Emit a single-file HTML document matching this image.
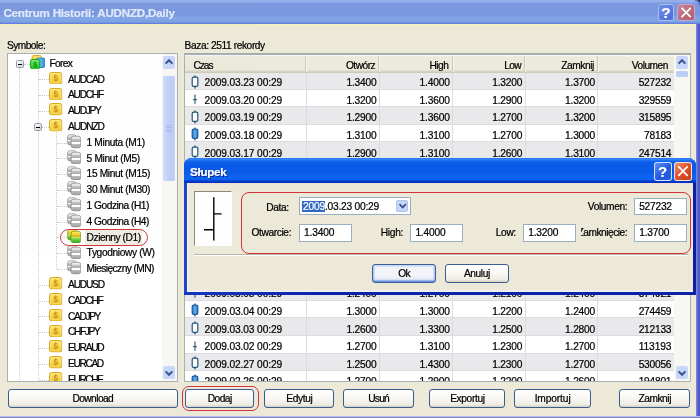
<!DOCTYPE html><html><head><meta charset="utf-8"><title>Centrum Historii</title><style>
*{margin:0;padding:0;box-sizing:border-box}
html,body{width:700px;height:418px;overflow:hidden;background:#ECE9D8}
body{font-family:"Liberation Sans","DejaVu Sans",sans-serif;font-size:10.2px;color:#000;position:relative;-webkit-text-stroke-width:0.22px}
#w{position:absolute;left:0;top:0;width:700px;height:418px;overflow:hidden;background:#ECE9D8;will-change:transform;opacity:0.999}
.a{position:absolute}
.t{position:absolute;white-space:pre;line-height:12px;height:12px;letter-spacing:-0.7px}
.n{letter-spacing:-0.3px}
#tb{left:0;top:0;width:700px;height:25px;background:linear-gradient(#95b0eb 0%,#93aeea 8%,#7c98e0 13%,#7a96df 58%,#7c9fe6 64%,#82a6e7 72%,#7ea5e3 82%,#7aa2df 89%,#6a80e2 92%,#6478e1 96%,#8a98d8 100%)}
#tbt{left:3.4px;top:5px;font-size:11.6px;font-weight:bold;color:#e0e9fa;line-height:16px;height:16px;letter-spacing:-0.2px}
.cb{position:absolute;border-radius:3px;border:1px solid #a9bdf0}
.pan{position:absolute;background:#fff;border:1px solid #a9b0af;overflow:hidden}
.btn{position:absolute;height:18.4px;top:389.3px;border:1px solid #3d5c8e;border-radius:3px;background:linear-gradient(#fff 0%,#f8f7f2 50%,#eeece2 85%,#d6d1c2 100%);text-align:center;line-height:18.8px;letter-spacing:-0.7px;white-space:pre}
.row{position:absolute;left:0;width:489px;height:17.6px}
.g{background:#e9e9eb}
.hl{position:absolute;left:0;width:489px;height:1px;background:#dcdce0}
.vl{position:absolute;top:17px;width:1px;height:320px;background:#dcdce0}
.c{position:absolute;text-align:right;white-space:pre;line-height:12px;height:12px;letter-spacing:-0.4px}
.hd{position:absolute;top:0;height:17.5px;background:#ebeadb}
.inp{position:absolute;height:17.4px;background:#fff;border:1px solid #9aaec2;line-height:16.6px;padding-left:4.2px;letter-spacing:-0.4px;white-space:pre}
.dot-v{position:absolute;width:0;border-left:1px dotted #cbcbcb}
.dot-h{position:absolute;height:0;border-top:1px dotted #cbcbcb}
</style></head><body><div id="w">
<svg width="0" height="0" style="position:absolute"><defs>
<linearGradient id="gy" x1="0" y1="0" x2="0" y2="1"><stop offset="0" stop-color="#fce672"/><stop offset="1" stop-color="#f1c42e"/></linearGradient>
<linearGradient id="gg" x1="0" y1="0" x2="0" y2="1"><stop offset="0" stop-color="#74ea70"/><stop offset="1" stop-color="#22c226"/></linearGradient>
<linearGradient id="gb" x1="0" y1="0" x2="1" y2="0"><stop offset="0" stop-color="#8fd0f5"/><stop offset="1" stop-color="#2f8fdc"/></linearGradient>
<linearGradient id="gc" x1="0" y1="0" x2="0" y2="1"><stop offset="0" stop-color="#f4f4f4"/><stop offset="0.45" stop-color="#d9d9d9"/><stop offset="1" stop-color="#b9b9b9"/></linearGradient>
<linearGradient id="gdb" x1="0" y1="0" x2="0" y2="1"><stop offset="0" stop-color="#f2f2f2"/><stop offset="0.24" stop-color="#dedede"/><stop offset="0.3" stop-color="#b6b6b6"/><stop offset="0.48" stop-color="#b2b2b2"/><stop offset="0.52" stop-color="#fff"/><stop offset="0.62" stop-color="#fff"/><stop offset="0.67" stop-color="#bcbcbc"/><stop offset="1" stop-color="#a2a2a2"/></linearGradient>
<linearGradient id="gdc" x1="0" y1="0" x2="0" y2="1"><stop offset="0" stop-color="#fff46e"/><stop offset="0.28" stop-color="#f3d22c"/><stop offset="0.44" stop-color="#dcae10"/><stop offset="0.5" stop-color="#e6f2a0"/><stop offset="0.56" stop-color="#8fe456"/><stop offset="1" stop-color="#27a616"/></linearGradient>
<linearGradient id="gcy" x1="0" y1="0" x2="0" y2="1"><stop offset="0" stop-color="#fff27a"/><stop offset="1" stop-color="#e2b414"/></linearGradient>
<linearGradient id="gcg" x1="0" y1="0" x2="0" y2="1"><stop offset="0" stop-color="#9bef5a"/><stop offset="1" stop-color="#2fae18"/></linearGradient>
<linearGradient id="gcf" x1="0" y1="0" x2="1" y2="0"><stop offset="0" stop-color="#2876c8"/><stop offset="0.5" stop-color="#62aeec"/><stop offset="1" stop-color="#2876c8"/></linearGradient>
<symbol id="i-d" viewBox="0 0 14 13"><rect x="0.5" y="0.5" width="13" height="12" rx="2.2" fill="url(#gy)" stroke="#d6a51c"/><rect x="1.6" y="1.6" width="10.8" height="9.8" rx="1.4" fill="none" stroke="#fbe98a" stroke-width="0.7"/><text x="7" y="9.7" font-size="8.6" font-weight="bold" text-anchor="middle" fill="#c48e14" font-family="Liberation Sans, sans-serif" style="-webkit-text-stroke-width:0">$</text></symbol>
<symbol id="i-fx" viewBox="0 0 16 15"><rect x="2.2" y="0.5" width="9.4" height="8" rx="1.8" fill="url(#gy)" stroke="#d8a81f"/><rect x="6.4" y="3.2" width="9" height="9.6" rx="1.8" fill="url(#gb)" stroke="#2a84d2"/><rect x="0.5" y="4.6" width="9.4" height="9.6" rx="1.8" fill="url(#gg)" stroke="#19a51c"/><text x="5.2" y="12" font-size="7" font-weight="bold" text-anchor="middle" fill="#0b8a12" font-family="Liberation Sans, sans-serif" style="-webkit-text-stroke-width:0">$</text></symbol>
<symbol id="i-db" viewBox="0 0 14.2 14.6"><rect x="0.6" y="0.7" width="8.6" height="10.2" rx="2.2" fill="url(#gdb)" stroke="#9a9a9a" stroke-width="0.8"/><rect x="4.1" y="2.2" width="9.6" height="11.8" rx="2.4" fill="url(#gdb)" stroke="#8e8e8e" stroke-width="0.8"/></symbol>
<symbol id="i-dbc" viewBox="0 0 14.2 14.6"><rect x="0.6" y="0.7" width="8.6" height="10.2" rx="2.2" fill="url(#gdc)" stroke="#9aa22a" stroke-width="0.8"/><rect x="4.1" y="2.2" width="9.6" height="11.8" rx="2.4" fill="url(#gdc)" stroke="#7a9a20" stroke-width="0.8"/></symbol>
<symbol id="c-h" viewBox="0 0 8 14"><path d="M4 0.4V2.2M4 11.4V13.4" stroke="#1f5474" stroke-width="1.2"/><rect x="1.2" y="2.2" width="5.6" height="9.2" rx="1.4" fill="#fff" stroke="#1f5474" stroke-width="1.2"/></symbol>
<symbol id="c-f" viewBox="0 0 8 14"><path d="M4 0.4V2.2M4 11.4V13.4" stroke="#1c5a9a" stroke-width="1.2"/><rect x="1.2" y="2.2" width="5.6" height="9.2" rx="1.4" fill="url(#gcf)" stroke="#1c5a9a" stroke-width="1.2"/></symbol>
<symbol id="c-d" viewBox="0 0 8 14"><path d="M4 2.6V11.8M2.2 7.6H5.8" stroke="#1f567a" stroke-width="1.1"/></symbol>
<symbol id="chev-u" viewBox="0 0 12 12"><path d="M2.6 7.6L6 4.2L9.4 7.6" fill="none" stroke="#38548f" stroke-width="2"/></symbol>
<symbol id="chev-d" viewBox="0 0 12 12"><path d="M2.6 4.4L6 7.8L9.4 4.4" fill="none" stroke="#38548f" stroke-width="2"/></symbol>
</defs></svg>
<div class="a" id="tb"></div>
<div class="a" style="left:0;top:24.3px;width:700px;height:1.4px;background:#eef2c0"></div><div class="a" style="left:0;top:25.7px;width:700px;height:2.4px;background:linear-gradient(#efe4dc,#ece9d8)"></div>
<div class="t" id="tbt">Centrum Historii: AUDNZD,Daily</div>
<svg class="a" style="left:694.5px;top:0" width="5.5" height="5.5" viewBox="0 0 5.5 5.5"><path d="M0 0H5.5V5.5C5.5 2.4 3.1 0 0 0Z" fill="#222c52"/><path d="M0 0.6C2.7 0.6 4.9 2.8 4.9 5.5" fill="none" stroke="#566ecc" stroke-width="1.2"/></svg>
<div class="cb" style="left:657.6px;top:4px;width:16.8px;height:17px;background:linear-gradient(135deg,#6f8fe4,#4a6cd6)"></div>
<div class="t" style="left:657.6px;top:3.6px;width:16.8px;text-align:center;color:#fff;font-weight:bold;font-size:15.5px;line-height:18px;height:18px;letter-spacing:0">?</div>
<div class="cb" style="left:677px;top:4px;width:18.2px;height:17px;background:linear-gradient(135deg,#c98396,#b05a6a);border-color:#c4a8d4"></div>
<svg class="a" style="left:677px;top:4px" width="18.2" height="17" viewBox="0 0 18.2 17"><path d="M4.6 3.9L13.8 13.1M13.8 3.9L4.6 13.1" stroke="#fff" stroke-width="1.8"/></svg>
<div class="a" style="left:696px;top:24px;width:4px;height:394px;background:linear-gradient(90deg,#8a92e0,#5c62d0 40%,#5058c8)"></div>
<div class="a" style="left:0;top:415.5px;width:700px;height:2.5px;background:linear-gradient(#ccd0f3,#a2a6e2 40%,#8085d2 80%,#787dcc)"></div>
<div class="t" style="left:6.9px;top:39.6px;letter-spacing:-0.52px">Symbole:</div>
<div class="t" style="left:184.6px;top:39.6px;letter-spacing:-0.41px">Baza: 2511 rekordy</div>
<div class="a" style="left:6.9px;top:52.5px;width:171.2px;height:1.4px;background:#a3adac"></div>
<div class="pan" style="left:6.9px;top:53.3px;width:171.2px;height:328.7px">
<div class="dot-v" style="left:11.3px;top:13.7px;height:330px"></div>
<div class="dot-v" style="left:30.3px;top:15.7px;height:330px"></div>
<div class="dot-v" style="left:48.5px;top:78.2px;height:136.7px"></div>
<div class="dot-h" style="left:16.1px;top:9.7px;width:6px"></div>
<div class="dot-h" style="left:30.7px;top:25.2px;width:10.5px"></div>
<div class="dot-h" style="left:30.7px;top:41.0px;width:10.5px"></div>
<div class="dot-h" style="left:30.7px;top:56.8px;width:10.5px"></div>
<div class="dot-h" style="left:30.7px;top:72.6px;width:10.5px"></div>
<div class="dot-h" style="left:48.9px;top:88.4px;width:10.5px"></div>
<div class="dot-h" style="left:48.9px;top:104.2px;width:10.5px"></div>
<div class="dot-h" style="left:48.9px;top:120.0px;width:10.5px"></div>
<div class="dot-h" style="left:48.9px;top:135.8px;width:10.5px"></div>
<div class="dot-h" style="left:48.9px;top:151.6px;width:10.5px"></div>
<div class="dot-h" style="left:48.9px;top:167.4px;width:10.5px"></div>
<div class="dot-h" style="left:48.9px;top:183.2px;width:10.5px"></div>
<div class="dot-h" style="left:48.9px;top:199.0px;width:10.5px"></div>
<div class="dot-h" style="left:48.9px;top:214.8px;width:10.5px"></div>
<div class="dot-h" style="left:30.7px;top:230.6px;width:10.5px"></div>
<div class="dot-h" style="left:30.7px;top:246.4px;width:10.5px"></div>
<div class="dot-h" style="left:30.7px;top:262.2px;width:10.5px"></div>
<div class="dot-h" style="left:30.7px;top:278.0px;width:10.5px"></div>
<div class="dot-h" style="left:30.7px;top:293.8px;width:10.5px"></div>
<div class="dot-h" style="left:30.7px;top:309.6px;width:10.5px"></div>
<div class="dot-h" style="left:30.7px;top:325.4px;width:10.5px"></div>
<div class="a" style="left:7.9px;top:6.0px;width:8px;height:8px;border:1px solid #8c9cb4;border-radius:1.5px;background:linear-gradient(135deg,#fff,#d4d0c4)"></div>
<div class="a" style="left:9.7px;top:9.4px;width:4.4px;height:1.2px;background:#000"></div>
<div class="a" style="left:26.3px;top:69.1px;width:8px;height:8px;border:1px solid #8c9cb4;border-radius:1.5px;background:linear-gradient(135deg,#fff,#d4d0c4)"></div>
<div class="a" style="left:28.1px;top:72.5px;width:4.4px;height:1.2px;background:#000"></div>
<div class="a" style="left:76.7px;top:175.3px;width:57.8px;height:15px;background:#efede1"></div>
<svg class="a" style="left:21.7px;top:0.5px" width="15.6" height="14.6"><use href="#i-fx"/></svg>
<div class="t" style="left:41.6px;top:3.6px;letter-spacing:-0.64px">Forex</div>
<svg class="a" style="left:41.4px;top:17.5px" width="13.4" height="12.4"><use href="#i-d"/></svg>
<div class="t" style="left:60.2px;top:19.4px;letter-spacing:-1.24px">AUDCAD</div>
<svg class="a" style="left:41.4px;top:33.3px" width="13.4" height="12.4"><use href="#i-d"/></svg>
<div class="t" style="left:60.2px;top:35.2px;letter-spacing:-1.27px">AUDCHF</div>
<svg class="a" style="left:41.4px;top:49.1px" width="13.4" height="12.4"><use href="#i-d"/></svg>
<div class="t" style="left:60.2px;top:51.0px;letter-spacing:-1.29px">AUDJPY</div>
<svg class="a" style="left:41.4px;top:64.9px" width="13.4" height="12.4"><use href="#i-d"/></svg>
<div class="t" style="left:60.2px;top:66.8px;letter-spacing:-1.11px">AUDNZD</div>
<svg class="a" style="left:59.1px;top:79.7px" width="14.2" height="14.6"><use href="#i-db"/></svg>
<div class="t" style="left:78.7px;top:82.6px;letter-spacing:-0.36px">1 Minuta (M1)</div>
<svg class="a" style="left:59.1px;top:95.5px" width="14.2" height="14.6"><use href="#i-db"/></svg>
<div class="t" style="left:78.7px;top:98.4px;letter-spacing:-0.33px">5 Minut (M5)</div>
<svg class="a" style="left:59.1px;top:111.3px" width="14.2" height="14.6"><use href="#i-db"/></svg>
<div class="t" style="left:78.7px;top:114.2px;letter-spacing:-0.36px">15 Minut (M15)</div>
<svg class="a" style="left:59.1px;top:127.1px" width="14.2" height="14.6"><use href="#i-db"/></svg>
<div class="t" style="left:78.7px;top:130.0px;letter-spacing:-0.36px">30 Minut (M30)</div>
<svg class="a" style="left:59.1px;top:142.9px" width="14.2" height="14.6"><use href="#i-db"/></svg>
<div class="t" style="left:78.7px;top:145.8px;letter-spacing:-0.48px">1 Godzina (H1)</div>
<svg class="a" style="left:59.1px;top:158.7px" width="14.2" height="14.6"><use href="#i-db"/></svg>
<div class="t" style="left:78.7px;top:161.6px;letter-spacing:-0.48px">4 Godzina (H4)</div>
<svg class="a" style="left:59.1px;top:174.5px" width="14.2" height="14.6"><use href="#i-dbc"/></svg>
<div class="t" style="left:78.7px;top:177.4px;letter-spacing:-0.45px">Dzienny (D1)</div>
<svg class="a" style="left:59.1px;top:190.3px" width="14.2" height="14.6"><use href="#i-db"/></svg>
<div class="t" style="left:78.7px;top:193.2px;letter-spacing:-0.36px">Tygodniowy (W)</div>
<svg class="a" style="left:59.1px;top:206.1px" width="14.2" height="14.6"><use href="#i-db"/></svg>
<div class="t" style="left:78.7px;top:209.0px;letter-spacing:-0.57px">Miesięczny (MN)</div>
<svg class="a" style="left:41.4px;top:222.9px" width="13.4" height="12.4"><use href="#i-d"/></svg>
<div class="t" style="left:60.2px;top:224.8px;letter-spacing:-1.22px">AUDUSD</div>
<svg class="a" style="left:41.4px;top:238.7px" width="13.4" height="12.4"><use href="#i-d"/></svg>
<div class="t" style="left:60.2px;top:240.6px;letter-spacing:-1.36px">CADCHF</div>
<svg class="a" style="left:41.4px;top:254.5px" width="13.4" height="12.4"><use href="#i-d"/></svg>
<div class="t" style="left:60.2px;top:256.4px;letter-spacing:-1.38px">CADJPY</div>
<svg class="a" style="left:41.4px;top:270.3px" width="13.4" height="12.4"><use href="#i-d"/></svg>
<div class="t" style="left:60.2px;top:272.2px;letter-spacing:-1.40px">CHFJPY</div>
<svg class="a" style="left:41.4px;top:286.1px" width="13.4" height="12.4"><use href="#i-d"/></svg>
<div class="t" style="left:60.2px;top:288.0px;letter-spacing:-1.31px">EURAUD</div>
<svg class="a" style="left:41.4px;top:301.9px" width="13.4" height="12.4"><use href="#i-d"/></svg>
<div class="t" style="left:60.2px;top:303.8px;letter-spacing:-1.39px">EURCAD</div>
<svg class="a" style="left:41.4px;top:317.7px" width="13.4" height="12.4"><use href="#i-d"/></svg>
<div class="t" style="left:60.2px;top:319.6px;letter-spacing:-1.42px">EURCHF</div>
<div class="a" style="left:52.3px;top:174.5px;width:87.6px;height:17px;border:1.2px solid #d2343c;border-radius:8.5px"></div>
<div class="a" style="left:153.7px;top:0;width:16px;height:327px;background:#f8f7f3"></div>
<div class="a" style="left:154.9px;top:1.9px;width:12.6px;height:12.6px;background:#c8d6f9;border-radius:2px"></div>
<svg class="a" style="left:155.2px;top:2.0px" width="12" height="12"><use href="#chev-u"/></svg>
<div class="a" style="left:155.3px;top:22.2px;width:12px;height:104.5px;background:linear-gradient(90deg,#d0dcfb,#c1d1f8 40%,#bccdf6 80%,#c4d3f8);border-radius:1.5px"></div>
<div class="a" style="left:158.5px;top:71.1px;width:5.6px;height:0.9px;background:#a4b8ea"></div>
<div class="a" style="left:158.5px;top:73.0px;width:5.6px;height:0.9px;background:#a4b8ea"></div>
<div class="a" style="left:158.5px;top:74.9px;width:5.6px;height:0.9px;background:#a4b8ea"></div>
<div class="a" style="left:158.5px;top:76.8px;width:5.6px;height:0.9px;background:#a4b8ea"></div>
<div class="a" style="left:154.9px;top:311.9px;width:12.6px;height:13.2px;background:#c8d6f9;border-radius:2px"></div>
<svg class="a" style="left:155.2px;top:312.6px" width="12" height="12"><use href="#chev-d"/></svg>
</div>
<div class="a" style="left:184.3px;top:52.6px;width:506.6px;height:1.4px;background:#a3adac"></div>
<div class="pan" style="left:184.3px;top:53.5px;width:506.6px;height:328.5px">
<div class="row g" style="top:17.0px"></div>
<div class="row" style="top:34.6px"></div>
<div class="row g" style="top:52.2px"></div>
<div class="row" style="top:69.8px"></div>
<div class="row g" style="top:87.4px"></div>
<div class="row" style="top:105.0px"></div>
<div class="row g" style="top:122.6px"></div>
<div class="row" style="top:140.2px"></div>
<div class="row g" style="top:157.8px"></div>
<div class="row" style="top:175.4px"></div>
<div class="row g" style="top:193.0px"></div>
<div class="row" style="top:210.6px"></div>
<div class="row g" style="top:228.2px"></div>
<div class="row" style="top:245.8px"></div>
<div class="row g" style="top:263.4px"></div>
<div class="row" style="top:281.0px"></div>
<div class="row g" style="top:298.6px"></div>
<div class="row" style="top:316.2px"></div>
<div class="hl" style="top:34.0px"></div>
<div class="hl" style="top:51.6px"></div>
<div class="hl" style="top:69.2px"></div>
<div class="hl" style="top:86.8px"></div>
<div class="hl" style="top:104.4px"></div>
<div class="hl" style="top:122.0px"></div>
<div class="hl" style="top:139.6px"></div>
<div class="hl" style="top:157.2px"></div>
<div class="hl" style="top:174.8px"></div>
<div class="hl" style="top:192.4px"></div>
<div class="hl" style="top:210.0px"></div>
<div class="hl" style="top:227.6px"></div>
<div class="hl" style="top:245.2px"></div>
<div class="hl" style="top:262.8px"></div>
<div class="hl" style="top:280.4px"></div>
<div class="hl" style="top:298.0px"></div>
<div class="hl" style="top:315.6px"></div>
<div class="hl" style="top:333.2px"></div>
<div class="vl" style="left:120.6px"></div>
<div class="vl" style="left:193.6px"></div>
<div class="vl" style="left:266.8px"></div>
<div class="vl" style="left:339.4px"></div>
<div class="vl" style="left:412.2px"></div>
<div class="vl" style="left:488.4px"></div>
<svg class="a" style="left:6.0px;top:20.0px" width="8" height="14"><use href="#c-h"/></svg>
<div class="t n" style="left:19.3px;top:22.6px;letter-spacing:-0.12px">2009.03.23 00:29</div>
<div class="c" style="left:131.2px;width:60px;top:22.6px;letter-spacing:-0.18px">1.3400</div>
<div class="c" style="left:204.4px;width:60px;top:22.6px;letter-spacing:-0.18px">1.4000</div>
<div class="c" style="left:277.0px;width:60px;top:22.6px;letter-spacing:-0.18px">1.3200</div>
<div class="c" style="left:349.8px;width:60px;top:22.6px;letter-spacing:-0.18px">1.3700</div>
<div class="c" style="left:426.0px;width:60px;top:22.6px;letter-spacing:-0.23px">527232</div>
<svg class="a" style="left:6.0px;top:37.6px" width="8" height="14"><use href="#c-d"/></svg>
<div class="t n" style="left:19.3px;top:40.2px;letter-spacing:-0.12px">2009.03.20 00:29</div>
<div class="c" style="left:131.2px;width:60px;top:40.2px;letter-spacing:-0.18px">1.3200</div>
<div class="c" style="left:204.4px;width:60px;top:40.2px;letter-spacing:-0.18px">1.3600</div>
<div class="c" style="left:277.0px;width:60px;top:40.2px;letter-spacing:-0.18px">1.2900</div>
<div class="c" style="left:349.8px;width:60px;top:40.2px;letter-spacing:-0.18px">1.3200</div>
<div class="c" style="left:426.0px;width:60px;top:40.2px;letter-spacing:-0.23px">329559</div>
<svg class="a" style="left:6.0px;top:55.2px" width="8" height="14"><use href="#c-h"/></svg>
<div class="t n" style="left:19.3px;top:57.8px;letter-spacing:-0.12px">2009.03.19 00:29</div>
<div class="c" style="left:131.2px;width:60px;top:57.8px;letter-spacing:-0.18px">1.2900</div>
<div class="c" style="left:204.4px;width:60px;top:57.8px;letter-spacing:-0.18px">1.3600</div>
<div class="c" style="left:277.0px;width:60px;top:57.8px;letter-spacing:-0.18px">1.2700</div>
<div class="c" style="left:349.8px;width:60px;top:57.8px;letter-spacing:-0.18px">1.3200</div>
<div class="c" style="left:426.0px;width:60px;top:57.8px;letter-spacing:-0.23px">315895</div>
<svg class="a" style="left:6.0px;top:72.8px" width="8" height="14"><use href="#c-f"/></svg>
<div class="t n" style="left:19.3px;top:75.4px;letter-spacing:-0.12px">2009.03.18 00:29</div>
<div class="c" style="left:131.2px;width:60px;top:75.4px;letter-spacing:-0.18px">1.3100</div>
<div class="c" style="left:204.4px;width:60px;top:75.4px;letter-spacing:-0.18px">1.3100</div>
<div class="c" style="left:277.0px;width:60px;top:75.4px;letter-spacing:-0.18px">1.2700</div>
<div class="c" style="left:349.8px;width:60px;top:75.4px;letter-spacing:-0.18px">1.3000</div>
<div class="c" style="left:426.0px;width:60px;top:75.4px;letter-spacing:-0.23px">78183</div>
<svg class="a" style="left:6.0px;top:90.4px" width="8" height="14"><use href="#c-h"/></svg>
<div class="t n" style="left:19.3px;top:93.0px;letter-spacing:-0.12px">2009.03.17 00:29</div>
<div class="c" style="left:131.2px;width:60px;top:93.0px;letter-spacing:-0.18px">1.2900</div>
<div class="c" style="left:204.4px;width:60px;top:93.0px;letter-spacing:-0.18px">1.3100</div>
<div class="c" style="left:277.0px;width:60px;top:93.0px;letter-spacing:-0.18px">1.2600</div>
<div class="c" style="left:349.8px;width:60px;top:93.0px;letter-spacing:-0.18px">1.3100</div>
<div class="c" style="left:426.0px;width:60px;top:93.0px;letter-spacing:-0.23px">247514</div>
<svg class="a" style="left:6.0px;top:231.2px" width="8" height="14"><use href="#c-d"/></svg>
<div class="t n" style="left:19.3px;top:233.8px;letter-spacing:-0.12px">2009.03.05 00:29</div>
<div class="c" style="left:131.2px;width:60px;top:233.8px;letter-spacing:-0.18px">1.2400</div>
<div class="c" style="left:204.4px;width:60px;top:233.8px;letter-spacing:-0.18px">1.2700</div>
<div class="c" style="left:277.0px;width:60px;top:233.8px;letter-spacing:-0.18px">1.2100</div>
<div class="c" style="left:349.8px;width:60px;top:233.8px;letter-spacing:-0.18px">1.2400</div>
<div class="c" style="left:426.0px;width:60px;top:233.8px;letter-spacing:-0.23px">374921</div>
<svg class="a" style="left:6.0px;top:248.8px" width="8" height="14"><use href="#c-f"/></svg>
<div class="t n" style="left:19.3px;top:251.4px;letter-spacing:-0.12px">2009.03.04 00:29</div>
<div class="c" style="left:131.2px;width:60px;top:251.4px;letter-spacing:-0.18px">1.3000</div>
<div class="c" style="left:204.4px;width:60px;top:251.4px;letter-spacing:-0.18px">1.3000</div>
<div class="c" style="left:277.0px;width:60px;top:251.4px;letter-spacing:-0.18px">1.2200</div>
<div class="c" style="left:349.8px;width:60px;top:251.4px;letter-spacing:-0.18px">1.2400</div>
<div class="c" style="left:426.0px;width:60px;top:251.4px;letter-spacing:-0.23px">274459</div>
<svg class="a" style="left:6.0px;top:266.4px" width="8" height="14"><use href="#c-h"/></svg>
<div class="t n" style="left:19.3px;top:269.0px;letter-spacing:-0.12px">2009.03.03 00:29</div>
<div class="c" style="left:131.2px;width:60px;top:269.0px;letter-spacing:-0.18px">1.2600</div>
<div class="c" style="left:204.4px;width:60px;top:269.0px;letter-spacing:-0.18px">1.3300</div>
<div class="c" style="left:277.0px;width:60px;top:269.0px;letter-spacing:-0.18px">1.2500</div>
<div class="c" style="left:349.8px;width:60px;top:269.0px;letter-spacing:-0.18px">1.2800</div>
<div class="c" style="left:426.0px;width:60px;top:269.0px;letter-spacing:-0.23px">212133</div>
<svg class="a" style="left:6.0px;top:284.0px" width="8" height="14"><use href="#c-d"/></svg>
<div class="t n" style="left:19.3px;top:286.6px;letter-spacing:-0.12px">2009.03.02 00:29</div>
<div class="c" style="left:131.2px;width:60px;top:286.6px;letter-spacing:-0.18px">1.2700</div>
<div class="c" style="left:204.4px;width:60px;top:286.6px;letter-spacing:-0.18px">1.3100</div>
<div class="c" style="left:277.0px;width:60px;top:286.6px;letter-spacing:-0.18px">1.2300</div>
<div class="c" style="left:349.8px;width:60px;top:286.6px;letter-spacing:-0.18px">1.2700</div>
<div class="c" style="left:426.0px;width:60px;top:286.6px;letter-spacing:-0.11px">113193</div>
<svg class="a" style="left:6.0px;top:301.6px" width="8" height="14"><use href="#c-h"/></svg>
<div class="t n" style="left:19.3px;top:304.2px;letter-spacing:-0.12px">2009.02.27 00:29</div>
<div class="c" style="left:131.2px;width:60px;top:304.2px;letter-spacing:-0.18px">1.2500</div>
<div class="c" style="left:204.4px;width:60px;top:304.2px;letter-spacing:-0.18px">1.4300</div>
<div class="c" style="left:277.0px;width:60px;top:304.2px;letter-spacing:-0.18px">1.2300</div>
<div class="c" style="left:349.8px;width:60px;top:304.2px;letter-spacing:-0.18px">1.2700</div>
<div class="c" style="left:426.0px;width:60px;top:304.2px;letter-spacing:-0.23px">530056</div>
<svg class="a" style="left:6.0px;top:319.2px" width="8" height="14"><use href="#c-f"/></svg>
<div class="t n" style="left:19.3px;top:321.8px;letter-spacing:-0.12px">2009.02.26 00:29</div>
<div class="c" style="left:131.2px;width:60px;top:321.8px;letter-spacing:-0.18px">1.2700</div>
<div class="c" style="left:204.4px;width:60px;top:321.8px;letter-spacing:-0.18px">1.2900</div>
<div class="c" style="left:277.0px;width:60px;top:321.8px;letter-spacing:-0.18px">1.2200</div>
<div class="c" style="left:349.8px;width:60px;top:321.8px;letter-spacing:-0.18px">1.2600</div>
<div class="c" style="left:426.0px;width:60px;top:321.8px;letter-spacing:-0.23px">194801</div>
<div class="hd" style="left:0;width:489.1px;height:18.2px;border-bottom:1px solid #cfcbbb;box-shadow:inset 0 -1px 0 #d8d4c4,inset 0 -2px 0 #e3dfce,inset 0 1.2px 0 #f3f6f6"></div>
<div class="a" style="left:120.1px;top:1px;width:1px;height:16px;background:#cdcab9"></div><div class="a" style="left:121.1px;top:1px;width:1px;height:16px;background:#f5f4ec"></div>
<div class="a" style="left:193.1px;top:1px;width:1px;height:16px;background:#cdcab9"></div><div class="a" style="left:194.1px;top:1px;width:1px;height:16px;background:#f5f4ec"></div>
<div class="a" style="left:266.3px;top:1px;width:1px;height:16px;background:#cdcab9"></div><div class="a" style="left:267.3px;top:1px;width:1px;height:16px;background:#f5f4ec"></div>
<div class="a" style="left:338.9px;top:1px;width:1px;height:16px;background:#cdcab9"></div><div class="a" style="left:339.9px;top:1px;width:1px;height:16px;background:#f5f4ec"></div>
<div class="a" style="left:411.7px;top:1px;width:1px;height:16px;background:#cdcab9"></div><div class="a" style="left:412.7px;top:1px;width:1px;height:16px;background:#f5f4ec"></div>
<div class="t" style="left:8.3px;top:5.3px;letter-spacing:-1.09px">Czas</div>
<div class="c" style="left:129.9px;width:60px;top:5.3px;letter-spacing:-0.50px">Otwórz</div>
<div class="c" style="left:203.1px;width:60px;top:5.3px;letter-spacing:-0.53px">High</div>
<div class="c" style="left:275.7px;width:60px;top:5.3px;letter-spacing:-0.68px">Low</div>
<div class="c" style="left:348.5px;width:60px;top:5.3px;letter-spacing:-0.44px">Zamknij</div>
<div class="c" style="left:422.5px;width:60px;top:5.3px;letter-spacing:-0.53px">Volumen</div>
<div class="a" style="left:489.1px;top:0;width:16px;height:327px;background:#f8f7f3"></div>
<div class="a" style="left:490.3px;top:1.9px;width:12.8px;height:12.4px;background:#c8d6f9;border-radius:2px"></div>
<svg class="a" style="left:490.7px;top:1.8px" width="12" height="12"><use href="#chev-u"/></svg>
<div class="a" style="left:490.7px;top:16.1px;width:12.2px;height:6px;background:#bccdf7;border-radius:1.5px"></div>
<div class="a" style="left:490.3px;top:311.7px;width:12.8px;height:13.2px;background:#c8d6f9;border-radius:2px"></div>
<svg class="a" style="left:490.7px;top:312.4px" width="12" height="12"><use href="#chev-d"/></svg>
</div>
<div class="btn" style="left:7.9px;width:169.8px;letter-spacing:-0.56px">Download</div>
<div class="btn" style="left:185.1px;width:69.2px;letter-spacing:-0.50px">Dodaj</div>
<div class="btn" style="left:264.3px;width:70.0px;letter-spacing:-0.38px">Edytuj</div>
<div class="btn" style="left:342.9px;width:71.4px;letter-spacing:-0.77px">Usuń</div>
<div class="btn" style="left:429.4px;width:76.0px;letter-spacing:-0.37px">Exportuj</div>
<div class="btn" style="left:514.3px;width:76.6px;letter-spacing:-0.11px">Importuj</div>
<div class="btn" style="left:619.4px;width:70.6px;letter-spacing:-0.44px">Zamknij</div>
<div class="a" style="left:182.2px;top:385.6px;width:76.6px;height:25.8px;border:1.2px solid #d2343c;border-radius:7px"></div>
<div class="a" style="left:184.3px;top:157.6px;width:512.1px;height:137.2px;background:#1a46d0;border-radius:7.5px 7.5px 0 0;overflow:hidden">
<div class="a" style="left:509.1px;top:20px;width:3px;height:117.2px;background:#0c1fa2"></div><div class="a" style="left:0;top:134.0px;width:512.1px;height:3.2px;background:linear-gradient(90deg,#1436c0,#0c22a6 30%)"></div>
<div class="a" style="left:0;top:0;width:512.1px;height:25.4px;background:linear-gradient(#1a66ee 0%,#3a8cf8 4%,#2478f4 8%,#0e62ec 14%,#0a5ae8 24%,#0a5ae8 60%,#0f64f2 72%,#0c60f0 86%,#0a4cd8 90%,#0038c8 93%,#0034c0 100%)"></div>
<div class="a" style="left:2.8px;top:25.2px;width:506.3px;height:108.8px;background:#ece9d8;box-shadow:inset 1px 0 0 #f4f4ee,inset 0 -1.5px 0 #f0f3f4,inset 0 1.2px 0 #f3dfd4"></div>
<div class="t" style="left:5.7px;top:6.8px;font-size:11.6px;font-weight:bold;color:#fff;line-height:16px;height:16px;letter-spacing:-0.25px;text-shadow:1px 1px 0 #0a2a8c">Słupek</div>
<div class="cb" style="left:469.5px;top:4.8px;width:18px;height:18.2px;border-color:rgba(255,255,255,.8);background:linear-gradient(135deg,#5a92f6,#2458dc 55%,#2a5ee0)"></div>
<div class="t" style="left:469.5px;top:5.2px;width:18px;text-align:center;color:#fff;font-weight:bold;font-size:14.5px;line-height:18px;height:18px;letter-spacing:0">?</div>
<div class="cb" style="left:490.0px;top:4.8px;width:18px;height:18.2px;border-color:rgba(255,255,255,.8);background:linear-gradient(135deg,#ee9478,#dc5028 50%,#c8401c)"></div>
<svg class="a" style="left:490.0px;top:4.8px" width="18" height="18.2" viewBox="0 0 18 18.2"><path d="M4.3 4.4L13.7 13.8M13.7 4.4L4.3 13.8" stroke="#fff" stroke-width="1.7"/></svg>
<div class="a" style="left:10.0px;top:33.6px;width:37.8px;height:55.2px;background:#fff;border-top:1.2px solid #8a8a80;border-left:1.2px solid #8a8a80;border-right:1px solid #fff;border-bottom:1px solid #fff"></div>
<svg class="a" style="left:10.0px;top:33.6px" width="37.8" height="55.2" viewBox="0 0 37.8 55.2"><path d="M19.8 6.2V49.4M19.8 22.9H27.6M10 38.7H19.8" stroke="#000" stroke-width="1.4" fill="none"/></svg>
<div class="a" style="left:56.9px;top:34.2px;width:449.8px;height:62.2px;border:1.2px solid #d2343c;border-radius:8px"></div>
<div class="a" style="left:10.0px;top:96.6px;width:494px;height:1px;background:#bab6a4"></div>
<div class="a" style="left:10.0px;top:97.6px;width:494px;height:1px;background:#fff"></div>
<div class="c" style="left:24.5px;width:80px;top:44.8px;letter-spacing:-0.35px">Data:</div>
<div class="c" style="left:26.8px;width:80px;top:69.8px;letter-spacing:-0.38px">Otwarcie:</div>
<div class="c" style="left:138.7px;width:80px;top:69.8px;letter-spacing:-0.33px">High:</div>
<div class="c" style="left:251.5px;width:80px;top:69.8px;letter-spacing:-0.39px">Low:</div>
<div class="c" style="left:362.8px;width:80px;top:43.8px;letter-spacing:-0.40px">Volumen:</div>
<div class="a" style="left:397.1px;top:66.4px;width:48px;height:18px;overflow:hidden"><div class="c" style="right:2.3px;width:80px;top:3.4px;letter-spacing:-0.49px">Zamknięcie:</div></div>
<div class="inp" style="left:114.6px;top:39.4px;width:112.4px;height:18.2px;padding-left:0"></div>
<div class="t n" style="left:118.2px;top:43.3px;letter-spacing:-0.22px"><span style="color:#fff;background:#316ac5;padding-left:0.6px">2009</span>.03.23 00:29</div>
<div class="a" style="left:211.6px;top:42.6px;width:12.6px;height:12.2px;background:#c8d6f9;border-radius:2px;border:0.6px solid #b0c4f0"></div>
<svg class="a" style="left:212.4px;top:42.6px" width="11.4" height="11.4"><use href="#chev-d"/></svg>
<div class="inp" style="left:114.6px;top:66.6px;width:53.1px;letter-spacing:-0.18px">1.3400</div>
<div class="inp" style="left:225.9px;top:66.6px;width:53.1px;letter-spacing:-0.18px">1.4000</div>
<div class="inp" style="left:338.7px;top:66.6px;width:53.0px;letter-spacing:-0.18px">1.3200</div>
<div class="inp" style="left:449.7px;top:66.6px;width:53.1px;letter-spacing:-0.18px">1.3700</div>
<div class="inp" style="left:449.7px;top:40.0px;width:53.1px;letter-spacing:-0.23px">527232</div>
<div class="btn" style="left:187.7px;top:106.8px;width:64px;height:18.4px;background:linear-gradient(#dfe7fa 0%,#f1f4fb 18%,#f4f5fa 60%,#e6ebf6 82%,#9db6ec 100%);box-shadow:inset 0 -1.6px 0 #6f95e4,inset 0 1.4px 0 #c9d8f8,inset 1.6px 0 0 #b7cbf4,inset -1.6px 0 0 #b7cbf4;letter-spacing:-0.88px">Ok</div>
<div class="btn" style="left:260.3px;top:106.8px;width:64.6px;height:18.4px;letter-spacing:-0.39px">Anuluj</div>
</div>
</div></body></html>
